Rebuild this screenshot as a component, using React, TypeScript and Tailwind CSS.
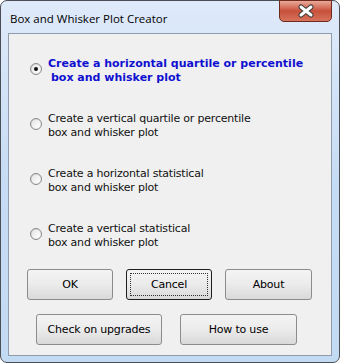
import React from 'react';

const options = [
  { first: 'Create a horizontal quartile or percentile', second: 'box and whisker plot', selected: true },
  { first: 'Create a vertical quartile or percentile', second: 'box and whisker plot', selected: false },
  { first: 'Create a horizontal statistical', second: 'box and whisker plot', selected: false },
  { first: 'Create a vertical statistical', second: 'box and whisker plot', selected: false },
];

function Radio({ checked }: { checked: boolean }) {
  return (
    <div className="w-[12px] h-[12px] rounded-full border border-[#8a8a8a] bg-gradient-to-br from-[#d0d0d0] to-[#fbfbfb] flex items-center justify-center shrink-0">
      <div className="w-[8px] h-[8px] rounded-full bg-gradient-to-br from-[#e6e6e6] to-white flex items-center justify-center">
        {checked && <div className="w-[4px] h-[4px] rounded-full bg-[#111]" />}
      </div>
    </div>
  );
}

function Button({ label, w, isDefault }: { label: string; w: string; isDefault?: boolean }) {
  return (
    <div
      className={`${w} h-[31px] rounded-[3px] border ${
        isDefault ? 'border-[#1e1e1e]' : 'border-[#8c8c8c]'
      } bg-gradient-to-b from-[#f4f4f4] via-[#ebebeb] to-[#d9d9d9] flex items-center justify-center p-[3px]`}
    >
      <div
        className={`w-full h-full flex items-center justify-center ${
          isDefault ? 'border border-dotted border-[#333]' : ''
        }`}
      >
        <span className="text-[11px] text-black leading-none tracking-[-0.2px]">{label}</span>
      </div>
    </div>
  );
}

export default function App() {
  return (
    <div className="w-[340px] h-[363px] bg-white" style={{ fontFamily: '"DejaVu Sans", sans-serif' }}>
      <div className="relative w-full h-full rounded-[7px] border border-[#4a4f55] bg-gradient-to-b from-[#dfeafa] via-[#c6dcf4] to-[#c3daf3] flex flex-col">
        <div className="h-[32px] shrink-0 pl-[9px] pt-[5px]">
          <span className="text-[11.5px] text-black leading-none" style={{ fontFamily: '"Open Sans", "Noto Sans", sans-serif' }}>
            Box and Whisker Plot Creator
          </span>
        </div>
        <div className="absolute top-[-1px] right-[7px] w-[53px] h-[22px] rounded-b-[5px] border border-[#6e2a1f] bg-gradient-to-b from-[#e9a99a] via-[#c8503a] to-[#d6735c] flex items-center justify-center">
          <svg width="18" height="14" viewBox="0 0 18 14">
            <path d="M4 3 L14 11 M14 3 L4 11" stroke="#3a3a3a" strokeWidth="5" strokeLinecap="round" />
            <path d="M4 3 L14 11 M14 3 L4 11" stroke="#ffffff" strokeWidth="3" strokeLinecap="round" />
          </svg>
        </div>
        <div className="flex-1 mx-[7px] mb-[6px] border border-[#8e9cae] bg-[#f0f0f0] pt-[23px]">
          <div className="flex flex-col gap-[27px] pl-[21px]">
            {options.map((o, i) => (
              <div key={i} className="flex items-center gap-[6px]">
                <div className="-mt-[4px]">
                  <Radio checked={o.selected} />
                </div>
                <div
                  className={`text-[11px] leading-[14px] ${
                    o.selected ? 'font-bold text-[#1010d0]' : 'text-[#111] tracking-[-0.2px]'
                  }`}
                >
                  <div>{o.first}</div>
                  <div className={o.selected ? 'pl-[3px]' : ''}>{o.second}</div>
                </div>
              </div>
            ))}
          </div>
          <div className="flex gap-[13px] pl-[18px] mt-[19px]">
            <Button label="OK" w="w-[86px]" />
            <Button label="Cancel" w="w-[86px]" isDefault />
            <Button label="About" w="w-[87px]" />
          </div>
          <div className="flex gap-[18px] pl-[27px] mt-[14px]">
            <Button label="Check on upgrades" w="w-[126px]" />
            <Button label="How to use" w="w-[117px]" />
          </div>
        </div>
      </div>
    </div>
  );
}
